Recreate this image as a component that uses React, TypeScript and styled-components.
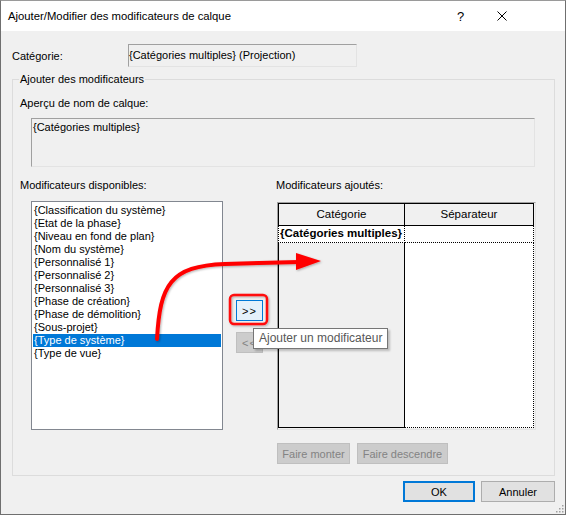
import React from "react";
import styled, { createGlobalStyle } from "styled-components";

const GlobalStyle = createGlobalStyle`
  html, body { margin: 0; padding: 0; background: #ffffff; }
  body {
    font-family: "Liberation Sans", Arial, sans-serif;
    font-size: 11px;
    color: #000;
  }
  * { box-sizing: border-box; }
`;

const Window = styled.div`
  position: relative;
  width: 566px;
  height: 515px;
  border: 1px solid #6f6f6f;
  border-top-color: #9a9a9a;
  background: #f0f0f0;
  display: flex;
  flex-direction: column;
  overflow: hidden;
`;

const TitleBar = styled.div`
  flex: none;
  height: 30px;
  background: #ffffff;
  display: flex;
  align-items: center;
  padding-left: 7px;
  padding-right: 43px;
`;

const Title = styled.span`
  flex: 1;
  font-size: 11.3px;
  color: #000;
`;

const CaptionButton = styled.div`
  width: 41px;
  height: 30px;
  display: flex;
  align-items: center;
  justify-content: center;
  font-size: 13px;
  color: #000;
`;

const Body = styled.div`
  flex: 1;
  display: flex;
  flex-direction: column;
  padding: 13px 10px 0 11px;
`;

const CategoryRow = styled.div`
  display: flex;
  align-items: center;
  height: 23px;
`;

const RowLabel = styled.span`
  width: 116px;
`;

const ReadOnlyField = styled.div`
  width: 229px;
  height: 23px;
  line-height: 21px;
  padding: 0 1px 0 0;
  border: 1px solid;
  border-color: #a0a0a0 #e3e3e3 #e3e3e3 #a0a0a0;
  background: #f0f0f0;
  white-space: nowrap;
`;

const Group = styled.div`
  position: relative;
  margin-top: 12px;
  height: 397px;
  border: 1px solid #dcdcdc;
  padding: 16px 0 0 7px;
  display: flex;
  flex-direction: column;
`;

const GroupLegend = styled.span`
  position: absolute;
  top: -8px;
  left: 6px;
  padding: 0 1px;
  line-height: 15px;
  background: #f0f0f0;
`;

const Label = styled.div`
  line-height: 15px;
  white-space: nowrap;
`;

const PreviewBox = styled.div`
  margin: 7px 19px 0 11px;
  height: 49px;
  border: 1px solid;
  border-color: #a0a0a0 #e3e3e3 #e3e3e3 #a0a0a0;
  background: #f0f0f0;
  padding: 2px 1px;
  line-height: 13px;
`;

const ListsRow = styled.div`
  display: flex;
  align-items: flex-start;
  margin-top: 11px;
`;

const Column = styled.div`
  display: flex;
  flex-direction: column;
`;

const ListBox = styled.div`
  margin: 8px 0 0 11px;
  width: 192px;
  height: 229px;
  border: 1px solid #828790;
  background: #ffffff;
  padding-top: 2px;
`;

const ListItem = styled.div<{ $selected?: boolean }>`
  height: 13px;
  line-height: 13px;
  margin: 0 1px;
  padding-left: 1px;
  white-space: nowrap;
  background: ${(p) => (p.$selected ? "#0078d7" : "transparent")};
  color: ${(p) => (p.$selected ? "#ffffff" : "#000000")};
`;

const MidColumn = styled.div`
  position: relative;
  margin-left: 13px;
  width: 27px;
  padding-top: 122px;
  display: flex;
  flex-direction: column;
  gap: 11px;
`;

const PushButton = styled.div<{ $w: number; $tone?: "normal" | "primary" | "hot" | "off" }>`
  width: ${(p) => p.$w}px;
  height: 21px;
  display: flex;
  align-items: center;
  justify-content: center;
  font-size: 11px;
  white-space: nowrap;
  border: ${(p) => (p.$tone === "primary" ? "2px" : "1px")} solid
    ${(p) =>
      p.$tone === "primary" || p.$tone === "hot"
        ? "#0078d7"
        : p.$tone === "off"
        ? "#bfbfbf"
        : "#adadad"};
  background: ${(p) =>
    p.$tone === "hot" ? "#e5f1fb" : p.$tone === "off" ? "#cccccc" : "#e1e1e1"};
  color: ${(p) => (p.$tone === "off" ? "#838383" : "#000000")};
  letter-spacing: ${(p) => (p.$w < 40 ? "1px" : "0")};
`;

const Tooltip = styled.div`
  position: absolute;
  left: 17px;
  top: 150px;
  z-index: 2;
  height: 21px;
  padding: 0 5px;
  line-height: 19px;
  font-size: 12px;
  color: #575757;
  background: #ffffff;
  border: 1px solid #767676;
  white-space: nowrap;
  box-shadow: 2px 2px 2px rgba(0, 0, 0, 0.22);
`;

const RightColumn = styled(Column)`
  margin-left: 13px;
`;

const Grid = styled.div`
  margin: 9px 0 0 1px;
  width: 259px;
  height: 228px;
  border: 1px solid;
  border-color: #a0a0a0 #e3e3e3 #e3e3e3 #a0a0a0;
  background: #f0f0f0;
  display: grid;
  grid-template-columns: 127px 129px;
  grid-template-rows: 23px 17px 185px;
`;

const HeaderCell = styled.div<{ $first?: boolean }>`
  border-top: 1px solid #000;
  border-bottom: 1px solid #000;
  border-right: 1px solid #000;
  border-left: ${(p) => (p.$first ? "1px solid #000" : "none")};
  background: #f0f0f0;
  text-align: center;
  line-height: 21px;
  font-size: 11.5px;
`;

const DataCell = styled.div<{ $first?: boolean }>`
  background: #ffffff;
  border-right: 1px dotted #000;
  border-bottom: 1px dotted #000;
  border-left: ${(p) => (p.$first ? "1px dotted #000" : "none")};
  font-weight: bold;
  font-size: 11.5px;
  line-height: 15px;
  padding-left: 1px;
  white-space: nowrap;
  overflow: hidden;
`;

const FillerCell = styled.div<{ $first?: boolean }>`
  background: ${(p) => (p.$first ? "#f0f0f0" : "#ffffff")};
  border-left: ${(p) => (p.$first ? "1px solid #000" : "none")};
  border-right: 1px ${(p) => (p.$first ? "solid" : "dotted")} #000;
  border-bottom: 1px ${(p) => (p.$first ? "solid" : "dotted")} #000;
`;

const ButtonRow = styled.div<{ $top: number; $left?: number; $end?: boolean }>`
  display: flex;
  gap: ${(p) => (p.$end ? 6 : 7)}px;
  margin-top: ${(p) => p.$top}px;
  margin-left: ${(p) => p.$left ?? 0}px;
  justify-content: ${(p) => (p.$end ? "flex-end" : "flex-start")};
`;

const Annotation = styled.svg`
  position: absolute;
  left: -1px;
  top: -1px;
  width: 566px;
  height: 515px;
  pointer-events: none;
  z-index: 3;
  overflow: visible;
`;

const Grip = styled.svg`
  position: absolute;
  right: 1px;
  bottom: 1px;
  width: 10px;
  height: 10px;
`;

const modifiers = [
  "{Classification du système}",
  "{Etat de la phase}",
  "{Niveau en fond de plan}",
  "{Nom du système}",
  "{Personnalisé 1}",
  "{Personnalisé 2}",
  "{Personnalisé 3}",
  "{Phase de création}",
  "{Phase de démolition}",
  "{Sous-projet}",
  "{Type de système}",
  "{Type de vue}",
];

export default function App() {
  return (
    <>
      <GlobalStyle />
      <Window>
        <TitleBar>
          <Title>Ajouter/Modifier des modificateurs de calque</Title>
          <CaptionButton>?</CaptionButton>
          <CaptionButton>
            <svg width="10" height="10" viewBox="0 0 10 10">
              <path d="M0.5 0.5 L9.5 9.5 M9.5 0.5 L0.5 9.5" stroke="#000" strokeWidth="1" fill="none" />
            </svg>
          </CaptionButton>
        </TitleBar>

        <Body>
          <CategoryRow>
            <RowLabel>Catégorie:</RowLabel>
            <ReadOnlyField>{"{Catégories multiples} (Projection)"}</ReadOnlyField>
          </CategoryRow>

          <Group>
            <GroupLegend>Ajouter des modificateurs</GroupLegend>
            <Label>Aperçu de nom de calque:</Label>
            <PreviewBox>{"{Catégories multiples}"}</PreviewBox>

            <ListsRow>
              <Column>
                <Label>Modificateurs disponibles:</Label>
                <ListBox>
                  {modifiers.map((m, i) => (
                    <ListItem key={m} $selected={i === 10}>
                      {m}
                    </ListItem>
                  ))}
                </ListBox>
              </Column>

              <MidColumn>
                <PushButton $w={27} $tone="hot">&gt;&gt;</PushButton>
                <PushButton $w={27} $tone="off">&lt;&lt;</PushButton>
                <Tooltip>Ajouter un modificateur</Tooltip>
              </MidColumn>

              <RightColumn>
                <Label>Modificateurs ajoutés:</Label>
                <Grid>
                  <HeaderCell $first>Catégorie</HeaderCell>
                  <HeaderCell>Séparateur</HeaderCell>
                  <DataCell $first>{"{Catégories multiples}"}</DataCell>
                  <DataCell />
                  <FillerCell $first />
                  <FillerCell />
                </Grid>
                <ButtonRow $top={13} $left={1}>
                  <PushButton $w={73} $tone="off">Faire monter</PushButton>
                  <PushButton $w={91} $tone="off">Faire descendre</PushButton>
                </ButtonRow>
              </RightColumn>
            </ListsRow>
          </Group>

          <ButtonRow $top={5} $end>
            <PushButton $w={72} $tone="primary">OK</PushButton>
            <PushButton $w={74}>Annuler</PushButton>
          </ButtonRow>
        </Body>

        <Annotation viewBox="0 0 566 515">
          <defs>
            <filter id="soft" x="-20%" y="-20%" width="140%" height="140%">
              <feDropShadow dx="1" dy="1" stdDeviation="1" floodColor="#000" floodOpacity="0.3" />
            </filter>
          </defs>
          <g filter="url(#soft)">
            <rect x="230" y="295" width="37" height="29" rx="4" fill="none" stroke="#ff1010" strokeWidth="2.5" />
            <path
              d="M157 339 C160 285 170 266 225 264 L299 262"
              fill="none"
              stroke="#ff0000"
              strokeWidth="4"
              strokeLinecap="round"
            />
            <polygon points="296,253 321,261 296,270" fill="#ff0000" />
          </g>
        </Annotation>

        <Grip viewBox="0 0 10 10">
          {[
            [8, 2],
            [5, 5],
            [8, 5],
            [2, 8],
            [5, 8],
            [8, 8],
          ].map(([x, y]) => (
            <rect key={`${x}-${y}`} x={x} y={y} width="1.5" height="1.5" fill="#a0a0a0" />
          ))}
        </Grip>
      </Window>
    </>
  );
}
